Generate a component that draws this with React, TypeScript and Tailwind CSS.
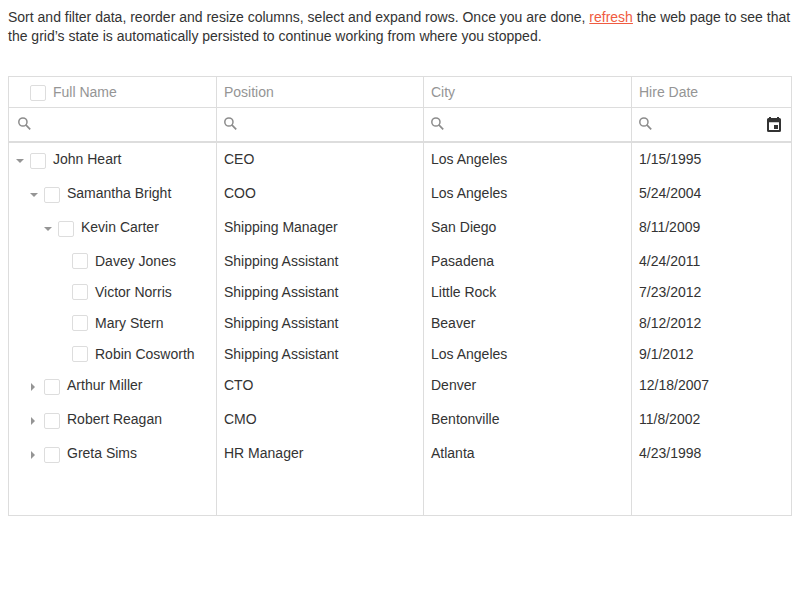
type Row = {
  name: string;
  position: string;
  city: string;
  date: string;
  level: number;
  state: 'open' | 'closed' | 'leaf';
};

const rows: Row[] = [
  { name: 'John Heart', position: 'CEO', city: 'Los Angeles', date: '1/15/1995', level: 0, state: 'open' },
  { name: 'Samantha Bright', position: 'COO', city: 'Los Angeles', date: '5/24/2004', level: 1, state: 'open' },
  { name: 'Kevin Carter', position: 'Shipping Manager', city: 'San Diego', date: '8/11/2009', level: 2, state: 'open' },
  { name: 'Davey Jones', position: 'Shipping Assistant', city: 'Pasadena', date: '4/24/2011', level: 3, state: 'leaf' },
  { name: 'Victor Norris', position: 'Shipping Assistant', city: 'Little Rock', date: '7/23/2012', level: 3, state: 'leaf' },
  { name: 'Mary Stern', position: 'Shipping Assistant', city: 'Beaver', date: '8/12/2012', level: 3, state: 'leaf' },
  { name: 'Robin Cosworth', position: 'Shipping Assistant', city: 'Los Angeles', date: '9/1/2012', level: 3, state: 'leaf' },
  { name: 'Arthur Miller', position: 'CTO', city: 'Denver', date: '12/18/2007', level: 1, state: 'closed' },
  { name: 'Robert Reagan', position: 'CMO', city: 'Bentonville', date: '11/8/2002', level: 1, state: 'closed' },
  { name: 'Greta Sims', position: 'HR Manager', city: 'Atlanta', date: '4/23/1998', level: 1, state: 'closed' },
];

const indents = ['pl-[7px]', 'pl-[21px]', 'pl-[35px]', 'pl-[49px]'];
const columns = 'grid grid-cols-[208px_207px_208px_159px]';
const cell = 'border-r border-[#ddd] pl-[7px]';

function Checkbox({ className }: { className: string }) {
  return <span className={`block size-4 shrink-0 rounded-[2px] border border-[#ddd] bg-white ${className}`} />;
}

function Search() {
  return (
    <svg className="h-[13px] w-[13px]" viewBox="0 0 13 13" fill="none" stroke="#8c8c8c">
      <circle cx="4.9" cy="5" r="4.1" strokeWidth="1.5" />
      <path d="M7.800 7.900L12.200 12.300" strokeWidth="1.7" />
    </svg>
  );
}

function Calendar() {
  return (
    <svg className="h-[15px] w-[14px] fill-[#333]" viewBox="0 0 14 15">
      <path
        fillRule="evenodd"
        d="M2 0h2v1h6V0h2v1h.5A1.5 1.5 0 0 1 14 2.500v11a1.500 1.500 0 0 1-1.500 1.500h-11A1.500 1.500 0 0 1 0 13.500v-11A1.500 1.500 0 0 1 1.500 1H2zM2 5.200v7.800h10V5.200z"
      />
      <path d="M7 8h4v4H7z" />
    </svg>
  );
}

function Arrow({ state }: { state: Row['state'] }) {
  return (
    <span className="h-6 w-[14px] shrink-0">
      {state === 'open' && (
        <svg className="mt-4 h-1 w-2 fill-[#959595]" viewBox="0 0 8 4">
          <path d="M0 0h8L4 4z" />
        </svg>
      )}
      {state === 'closed' && (
        <svg className="ml-[1px] mt-[14px] h-2 w-1 fill-[#959595]" viewBox="0 0 4 8">
          <path d="M0 0v8l4-4z" />
        </svg>
      )}
    </span>
  );
}

export default function App() {
  return (
    <div className="h-[600px] w-[800px] bg-white px-2 pt-2 font-['Liberation_Sans',Arial,sans-serif] text-[14px] leading-[18px] text-[#333]">
      <p className="h-[68px] w-[790px] leading-[19px]">
        Sort and filter data, reorder and resize columns, select and expand rows. Once you are done,{' '}
        <a className="text-[#f05b41] underline" href="#">refresh</a> the web page to see that
        <br />
        the grid’s state is automatically persisted to continue working from where you stopped.
      </p>
      <div className="flex h-[440px] w-[784px] flex-col border border-[#ddd]">
        <div className={`${columns} h-[31px] border-b border-[#ddd] text-[#959595]`}>
          <div className={`${cell} flex`}>
            <Checkbox className="ml-[14px] mt-2" />
            <span className="ml-[7px] mt-[6px]">Full Name</span>
          </div>
          <div className={`${cell} pt-[6px]`}>Position</div>
          <div className={`${cell} pt-[6px]`}>City</div>
          <div className="pl-[7px] pt-[6px]">Hire Date</div>
        </div>
        <div className={`${columns} h-[35px] border-b-2 border-[#ddd]`}>
          <div className="border-r border-[#ddd] pl-[9px] pt-[9px]"><Search /></div>
          <div className={`${cell} pt-[9px]`}><Search /></div>
          <div className={`${cell} pt-[9px]`}><Search /></div>
          <div className="flex justify-between pl-[7px] pr-[10px] pt-[9px]">
            <Search />
            <Calendar />
          </div>
        </div>
        {rows.map((row) => (
          <div key={row.name} className={`${columns} ${row.state === 'leaf' ? 'h-[31px]' : 'h-[34px]'}`}>
            <div className={`flex border-r border-[#ddd] ${indents[row.level]}`}>
              <Arrow state={row.state} />
              <Checkbox className={row.state === 'leaf' ? 'mt-2' : 'mt-[10px]'} />
              <span className="ml-[7px] mt-[7px] whitespace-nowrap">{row.name}</span>
            </div>
            <div className={`${cell} pt-[7px]`}>{row.position}</div>
            <div className={`${cell} pt-[7px]`}>{row.city}</div>
            <div className="pl-[7px] pt-[7px]">{row.date}</div>
          </div>
        ))}
        <div className={`${columns} flex-1`}>
          <div className={cell} />
          <div className={cell} />
          <div className={cell} />
        </div>
      </div>
    </div>
  );
}
